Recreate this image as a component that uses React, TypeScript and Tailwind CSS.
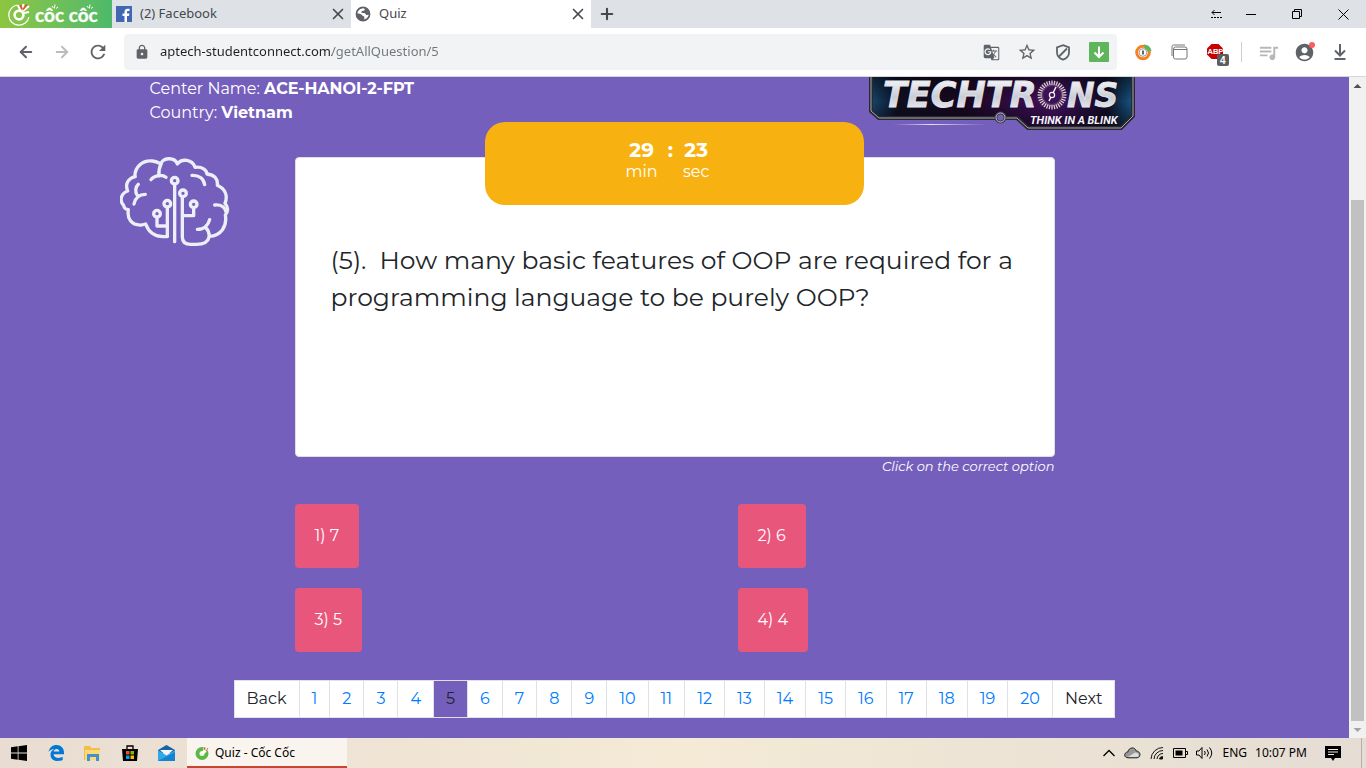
import type { ReactNode } from "react";
import { ArrowLeft, ArrowRight, Plus, X } from "lucide-react";
import {
  MdAccountCircle,
  MdGTranslate,
  MdLock,
  MdOutlineStarBorder,
  MdQueueMusic,
  MdRefresh,
} from "react-icons/md";

const answers = ["1) 7", "2) 6", "3) 5", "4) 4"];
const pages = Array.from({ length: 20 }, (_, i) => i + 1);
const currentPage = 5;

function IconButton({ label, children }: { label: string; children: ReactNode }) {
  return (
    <button aria-label={label} className="flex h-9 w-9 shrink-0 items-center justify-center text-[#5f6368]">
      {children}
    </button>
  );
}

function CocCocBrand() {
  return (
    <div className="flex w-28 shrink-0 items-center gap-1 bg-linear-to-r from-[#8dc63f] to-[#4db96b] pl-2 text-white">
      <svg width="23" height="26" viewBox="0 0 23 26" fill="none" aria-hidden="true">
        <path d="M9 4A10.200 10.200 0 1 0 21 16" stroke="#fff" strokeWidth="1.200" />
        <circle cx="11" cy="14" r="4.400" stroke="#fff" strokeWidth="2.600" />
        <path d="M9.500 4l3 5M15.500 3l-1.500 6M21 5l-6 5M21 11l-5 1" stroke="#fff" strokeWidth="2" />
        <path d="M12.500 4l1.500 4.500M19 3.500l-4 5" stroke="#e4572e" strokeWidth="1.800" />
      </svg>
      <svg width="68" height="26" viewBox="0 0 68 26" fill="none" stroke="#fff" aria-hidden="true">
        <text x="0" y="21" fill="#fff" strokeWidth="0.300" fontFamily="Lato" fontWeight="700" fontSize="19">
          côc côc
        </text>
        <path d="M17 5l1.500 2M20 3.500l-.6 4M23 6l-2 1.500M52 5l1.500 2M55 3.500l-.6 4M58 6l-2 1.500" />
      </svg>
    </div>
  );
}

function TabStrip() {
  return (
    <div className="flex h-7 bg-[#dee1e6] text-[13px] text-[#45494d]">
      <CocCocBrand />
      <div className="flex w-[239px] items-center pr-1 pl-1">
        <svg width="16" height="16" viewBox="0 0 16 16" aria-hidden="true">
          <rect width="16" height="16" fill="#4267b2" />
          <path d="M11 16V10h2l.4-2.4H11V6.2c0-.8.3-1.2 1.3-1.2h1.2V2.8c-.3 0-1-.1-1.8-.1C9.700 2.700 8.500 3.900 8.500 5.900v1.700H6.500V10h2v6z" fill="#fff" />
        </svg>
        <a href="#facebook" className="ml-2 grow">(2) Facebook</a>
        <button aria-label="Close Facebook tab"><X size={18} strokeWidth={2.2} /></button>
      </div>
      <div className="flex w-60 items-center bg-white pr-1 pl-1">
        <svg width="16" height="16" viewBox="0 0 16 16" aria-hidden="true">
          <circle cx="8" cy="8" r="7" fill="#5f6368" />
          <path d="M8 1.800c2 .6 2.400 1.800 1.200 2.600-1.200.6-2.500.2-2.800 1.500-.2 1.200 1.400 1 2.800 1.200 1.600.3 1.300 2 2.600 2l2.400-.3c-.6 2.500-2.600 4.600-5 5l.2-2.400c-.1-1.400-2-1-2.400-2.300C6.600 8 4.500 7.600 2 7.200 2.400 4.600 4.800 2.200 8 1.800z" fill="#fff" />
          <circle cx="8" cy="8" r="6.600" fill="none" stroke="#5f6368" strokeWidth="1.600" />
        </svg>
        <a href="#quiz" className="ml-2 grow">Quiz</a>
        <button aria-label="Close Quiz tab"><X size={18} strokeWidth={2.2} /></button>
      </div>
      <button aria-label="New tab" className="flex w-8 items-center justify-center">
        <Plus size={18} strokeWidth={2.8} />
      </button>
      <div className="ml-auto flex text-black">
        <button aria-label="Side panel" className="flex w-6 items-center justify-center">
          <svg width="11" height="9" viewBox="0 0 11 9" fill="none" stroke="currentColor">
            <path d="M1 2.500h9M3.500 0L1 2.500 3.500 5" />
            <path d="M0 7.500h11" strokeDasharray="2 1" />
          </svg>
        </button>
        <button aria-label="Minimize" className="flex w-[46px] items-center justify-center">
          <svg width="10" height="10" viewBox="0 0 10 10" stroke="currentColor"><path d="M0 5.500h10" /></svg>
        </button>
        <button aria-label="Restore" className="flex w-[46px] items-center justify-center">
          <svg width="10" height="10" viewBox="0 0 10 10" fill="none" stroke="currentColor">
            <path d="M.5 2.500h7v7h-7zM2.500 2.500v-2h7v7h-2" />
          </svg>
        </button>
        <button aria-label="Close" className="flex w-[46px] items-center justify-center">
          <svg width="11" height="11" viewBox="0 0 11 11" stroke="currentColor"><path d="M.5.5l10 10M10.500.5l-10 10" /></svg>
        </button>
      </div>
    </div>
  );
}

function Toolbar() {
  return (
    <div className="flex h-[49px] shrink-0 items-center border-b border-[#d5d6da] bg-white px-2">
      <IconButton label="Back"><ArrowLeft size={18} strokeWidth={2.6} /></IconButton>
      <IconButton label="Forward"><ArrowRight size={18} strokeWidth={2.6} className="text-[#babcbe]" /></IconButton>
      <IconButton label="Reload"><MdRefresh size={22} /></IconButton>
      <div className="mx-2 flex h-9 min-w-0 grow items-center rounded bg-[#f1f3f4]">
        <MdLock size={16} className="mx-2.5 shrink-0 text-[#5f6368]" />
        <input
          aria-label="Address"
          defaultValue="aptech-studentconnect.com/getAllQuestion/5"
          className="min-w-0 grow bg-[linear-gradient(to_right,#202124_172px,#70757a_172px)] bg-clip-text text-[13px] text-transparent outline-none"
        />
        <IconButton label="Translate page"><MdGTranslate size={17} /></IconButton>
        <IconButton label="Bookmark"><MdOutlineStarBorder size={20} /></IconButton>
        <IconButton label="Ad blocker">
          <svg width="16" height="17" viewBox="0 0 16 17" fill="none" stroke="currentColor" strokeWidth="1.8">
            <path d="M8 1.200L14 3.400v5c0 3.300-2.500 6-6 7.300-3.500-1.300-6-4-6-7.300v-5zM4 12.500L12 4.500" />
          </svg>
        </IconButton>
        <IconButton label="Download media">
          <svg width="20" height="20" viewBox="0 0 20 20" fill="none" stroke="#fff" strokeWidth="2">
            <rect width="20" height="20" rx="1" fill="#5fb55c" stroke="none" />
            <path d="M10 4.500v10M5.500 10.500L10 15l4.500-4.500" />
          </svg>
        </IconButton>
      </div>
      <IconButton label="Coin extension">
        <svg width="18" height="18" viewBox="0 0 18 18" fill="none">
          <circle cx="9" cy="9.500" r="6.300" stroke="#f58220" strokeWidth="3" />
          <path d="M10 1.500a8 8 0 0 1 7.500 6.500l-4 .5a4.500 4.500 0 0 0-3-3z" fill="#5fb55c" />
          <circle cx="9" cy="9.500" r="3.800" fill="#fff" stroke="#999" />
          <path d="M9 7.500v4" stroke="#666" strokeWidth="2" />
        </svg>
      </IconButton>
      <IconButton label="Windows extension">
        <svg width="17" height="16" viewBox="0 0 17 16" fill="none" stroke="#777">
          <path d="M1 12V2.500Q1 1 2.500 1H14" />
          <rect x="2.500" y="3" width="13.500" height="12" rx="2" />
          <path d="M2.500 5.500h13.500" />
        </svg>
      </IconButton>
      <IconButton label="AdBlock Plus, 4 blocked">
        <svg width="24" height="24" viewBox="-2 0 24 24" className="overflow-visible">
          <path d="M6.500 4h7L18 8.500v6L13.500 19h-7L2 14.500v-6z" fill="#c80000" />
          <text x="2.500" y="14" fontSize="7.500" fontWeight="700" fontFamily="Liberation Sans" fill="#fff">ABP</text>
          <rect x="12" y="14" width="12" height="12" rx="2" fill="#5c5e60" />
          <text x="15" y="24" fontSize="10" fontWeight="700" fontFamily="Liberation Sans" fill="#fff">4</text>
        </svg>
      </IconButton>
      <span className="mx-2 h-5 w-px bg-[#cdced1]" />
      <IconButton label="Media controls"><MdQueueMusic size={23} className="text-[#b5b7b9]" /></IconButton>
      <IconButton label="Profile">
        <span className="relative block">
          <MdAccountCircle size={21} className="block" />
          <span className="absolute top-0 right-0 size-1.5 rounded-full bg-[#ff5c5c]" />
        </span>
      </IconButton>
      <IconButton label="Downloads">
        <svg width="14" height="16" viewBox="0 0 14 16" fill="none" stroke="currentColor" strokeWidth="2">
          <path d="M7 0v11M2 6.500l5 5 5-5M1.500 15h11" />
        </svg>
      </IconButton>
    </div>
  );
}

function TechtronsLogo() {
  const ticks = Array.from({ length: 32 }, (_, i) => i * 11.25);
  return (
    <svg width="266" height="54" viewBox="0 0 266 54" role="img" aria-label="Techtrons, Think in a blink">
      <defs>
        <linearGradient id="plate" x1="0" x2="1">
          <stop offset="0" stopColor="#155078" />
          <stop offset=".1" stopColor="#101022" />
          <stop offset=".35" stopColor="#190820" />
          <stop offset=".7" stopColor="#4b126a" />
          <stop offset=".9" stopColor="#120d24" />
          <stop offset="1" stopColor="#146394" />
        </linearGradient>
        <linearGradient id="shade" x1="0" x2="0" y1="0" y2="1">
          <stop offset="0" stopColor="#07050e" stopOpacity=".65" />
          <stop offset=".5" stopColor="#07050e" stopOpacity=".1" />
          <stop offset="1" stopColor="#07050e" stopOpacity=".65" />
        </linearGradient>
        <linearGradient id="steel" x1="0" x2="0" y1="0" y2="1">
          <stop offset="0" stopColor="#fff" />
          <stop offset=".55" stopColor="#c9ccd6" />
          <stop offset="1" stopColor="#f7f7fb" />
        </linearGradient>
        <linearGradient id="streak" gradientUnits="userSpaceOnUse" x1="24" x2="118" y1="0" y2="0">
          <stop offset="0" stopColor="#d9d2e8" stopOpacity="0" />
          <stop offset=".4" stopColor="#e9e4ee" />
          <stop offset="1" stopColor="#d9d2e8" stopOpacity="0" />
        </linearGradient>
      </defs>
      <path d="M2-2V34l8 7H148l11 10h93l12-12V-2z" fill="url(#plate)" />
      <path d="M2-2V34l8 7H148l11 10h93l12-12V-2z" fill="url(#shade)" stroke="#29272f" strokeWidth="4" />
      <path d="M2-2V34l8 7H148l11 10h93l12-12V-2" fill="none" stroke="#a8a8b2" strokeWidth="1" />
      <path d="M24 47.500h94" stroke="url(#streak)" strokeWidth="1" />
      <g fill="url(#steel)" stroke="#e6e7ee" strokeWidth=".8" fontFamily="DejaVu Sans" fontWeight="700" fontStyle="italic">
        <text x="14" y="30" fontSize="35">TECHTR</text>
        <text x="198" y="30" fontSize="33">NS</text>
      </g>
      <circle cx="183" cy="18" r="14" fill="#3d1156" />
      <g stroke="#d9cfc8" strokeWidth="1.300">
        {ticks.map((a) => (
          <path key={a} d="M183 3.500v4.500" transform={`rotate(${a} 183 18)`} />
        ))}
      </g>
      <circle cx="183" cy="18" r="9.500" fill="none" stroke="#7c668a" strokeWidth=".6" />
      <circle cx="183" cy="18" r="2.600" fill="none" stroke="#eee" strokeWidth="1.200" />
      <path d="M180 24l2-4M184 16l3-6" stroke="#fff" strokeWidth="1.400" />
      <circle cx="131.500" cy="40.500" r="4.500" fill="#755fbc" stroke="#403d4b" strokeWidth="3" />
      <circle cx="131.500" cy="40.500" r="4.500" fill="none" stroke="#b5b5c0" strokeWidth="1" />
      <text x="161" y="47" fill="#f3f2f7" fontFamily="Roboto" fontWeight="700" fontStyle="italic" fontSize="11">
        THINK IN A BLINK
      </text>
    </svg>
  );
}

function BrainIcon() {
  return (
    <svg width="110" height="92" viewBox="30 246 330 276" fill="none" stroke="#eceef8" strokeWidth="10" strokeLinecap="round" strokeLinejoin="round" aria-hidden="true">
      <path d="M75 305c-2-28 22-50 52-47 12 1 20 6 26 9 2-18 40-24 49 0 14-18 45-14 53 10 22-3 35 8 36 20 22 2 33 14 31 34 24 11 32 31 23 54 9 9 11 24 1 35 6 34-13 62-48 64-4 19-17 24-39 24h-17c-18 0-25-8-25-22V366" />
      <path d="M75 305c-22 6-30 23-22 43-20 7-26 29-12 43 2 9 4 11 14 13-4 26 8 48 40 46l12-3c10 27 29 38 53 38h12V397" />
      <path d="M153 267c-5 10-8 18-6 36M123 314c9-13 33-17 45-7M85 328c-9 8-10 22-4 32M106 358c-20 0-30 10-34 29M194 331v169M141 430v23h31M219 422h32v-21M246 301c21-1 35 10 38 28M314 390c18-2 31 6 34 21M299 434c-4 15-16 29-37 29M288 459c9 8 9 16 10 25" />
      <circle cx="194" cy="317" r="10" />
      <circle cx="219" cy="355" r="10" />
      <circle cx="172" cy="386" r="10" />
      <circle cx="141" cy="416" r="10" />
      <circle cx="251" cy="388" r="10" />
    </svg>
  );
}

function Timer() {
  return (
    <div className="absolute inset-x-1/4 -top-9 flex h-[83px] justify-center gap-2.5 rounded-[20px] bg-[#f7b211] pt-4 pr-3.5 text-center text-base/5 text-white">
      <div>
        <div className="text-xl/6 font-bold">29</div>
        <div>min</div>
      </div>
      <div className="text-xl/6 font-bold">:</div>
      <div>
        <div className="text-xl/6 font-bold">23</div>
        <div>sec</div>
      </div>
    </div>
  );
}

function QuizPage() {
  return (
    <main className="min-w-0 grow overflow-hidden bg-[#755fbc] font-['Montserrat','Inter',sans-serif]">
      <div className="mx-auto max-w-[1140px] px-[15px]">
        <header className="flex h-20 items-start justify-between pr-[95px] pl-[30px] text-base/6 text-white">
          <div>
            <p>Center Name: <b>ACE-HANOI-2-FPT</b></p>
            <p>Country: <b>Vietnam</b></p>
          </div>
          <TechtronsLogo />
        </header>
        <div className="flex">
          <div className="w-[175px] shrink-0"><BrainIcon /></div>
          <div className="min-w-0 grow">
            <section className="relative h-[300px] max-w-[760px] rounded border border-[#dfdfdf] bg-white px-[35px] pt-[84px]">
              <Timer />
              <h1 className="text-[25px]/[37px] font-normal text-[#212529]">
                (5).&nbsp; How many basic features of OOP are required for a programming language to be purely OOP?
              </h1>
            </section>
            <p className="max-w-[760px] text-right text-[13px]/[19px] text-white italic">Click on the correct option</p>
            <div className="mt-7 grid grid-cols-[443px_1fr] justify-items-start gap-y-5">
              {answers.map((answer) => (
                <button key={answer} className="h-16 rounded bg-[#e9567b] px-5 text-base text-white">
                  {answer}
                </button>
              ))}
            </div>
          </div>
        </div>
      </div>
      <nav aria-label="Questions" className="mt-7 flex justify-center text-base/9">
        <ul className="flex divide-x divide-[#dee2e6] border border-[#dee2e6] bg-white text-[#007bff]">
          <li><a href="#back" className="block px-3 text-[#212529]">Back</a></li>
          {pages.map((page) => (
            <li key={page}>
              <a
                href={`#${page}`}
                aria-current={page === currentPage ? "page" : undefined}
                className={page === currentPage ? "block bg-[#755fbc] px-3 text-[#212529]" : "block px-3"}
              >
                {page}
              </a>
            </li>
          ))}
          <li><a href="#next" className="block px-3 text-[#212529]">Next</a></li>
        </ul>
      </nav>
    </main>
  );
}

function ScrollBar() {
  return (
    <div className="flex w-[17px] shrink-0 flex-col items-center bg-[#f1f1f1]" aria-hidden="true">
      <svg width="17" height="17" viewBox="0 0 17 17"><path d="M4.500 11h8l-4-4z" fill="#505050" /></svg>
      <div className="grow" />
      <div className="h-5/6 max-h-[521px] w-[13px] bg-[#c1c1c1]" />
      <svg width="17" height="17" viewBox="0 0 17 17"><path d="M4.500 7h8l-4 4z" fill="#a3a3a3" /></svg>
    </div>
  );
}

function TaskIcon({ label, children }: { label: string; children: ReactNode }) {
  return <button aria-label={label} className="flex w-[37px] items-center justify-center">{children}</button>;
}

function TrayIcon({ label, children }: { label: string; children: ReactNode }) {
  return <button aria-label={label} className="flex w-6 items-center justify-center">{children}</button>;
}

function Taskbar() {
  return (
    <footer className="flex h-[30px] shrink-0 bg-linear-to-r from-[#e9ddd3] via-[#f4ead6] to-[#e5dcd4] text-xs text-black">
      <TaskIcon label="Start">
        <svg width="16" height="16" viewBox="0 0 16 16"><path d="M0 2.200l6.700-.9v6.300H0zM7.500 1.200L16 0v7.600H7.500zM0 8.400h6.700v6.300L0 13.800zM7.500 8.400H16V16l-8.500-1.200z" /></svg>
      </TaskIcon>
      <TaskIcon label="Edge">
        <svg width="16" height="16" viewBox="0 0 16 16"><path d="M.5 7C1.500 2.500 4.500 0 8.500 0 13 0 16 3.200 16 7.500V9.200H5.600c.2 2.700 2.400 3.700 4.800 3.700 1.700 0 3-.4 4.300-1.100v3.300c-1.500.7-3.200.9-5 .9-4.700 0-7.200-2.900-7.200-6.300 0-2.600 1.400-4.700 3.900-5.700C3.600 4.300 1.700 5.300.5 7zM5.700 6.500h5.700C11.300 4.700 10.300 3.900 8.700 3.900 7 3.900 6 5 5.700 6.500z" fill="#0078d7" /></svg>
      </TaskIcon>
      <TaskIcon label="File Explorer">
        <svg width="17" height="15" viewBox="0 0 17 15"><path d="M0 0h6l1.500 2H16v12H0z" fill="#f2bd4a" /><path d="M1 4h15v10H1z" fill="#ffd977" /><path d="M3 15V8h12v7h-3v-4H6v4z" fill="#3f91d2" /></svg>
      </TaskIcon>
      <TaskIcon label="Microsoft Store">
        <svg width="16" height="16" viewBox="0 0 16 16"><path d="M0 4h16l-1 12H1z" /><path d="M5 5V1h6v4" fill="none" stroke="#000" strokeWidth="1.300" /><path d="M4 6h3.500v3.500H4z" fill="#f25022" /><path d="M8.500 6H12v3.500H8.500z" fill="#7fba00" /><path d="M4 10.500h3.500V14H4z" fill="#00a4ef" /><path d="M8.500 10.500H12V14H8.500z" fill="#ffb900" /></svg>
      </TaskIcon>
      <TaskIcon label="Mail">
        <svg width="17" height="16" viewBox="0 0 17 16"><path d="M0 5l8.500-5L17 5v3H0z" fill="#1565a8" /><path d="M2 5h13l-6.500 6z" fill="#f4f7fa" /><path d="M0 5l8.500 5.500L17 5v11H0z" fill="#2fa8ea" /><path d="M0 16l17-9v9z" fill="#1683d0" /></svg>
      </TaskIcon>
      <button className="ml-0.5 flex w-40 items-center gap-1 border-b-2 border-[#c8452f] bg-[#f9f5ee] pt-0.5 pl-2">
        <svg width="16" height="14" viewBox="0 0 16 14" fill="none"><circle cx="7" cy="7.500" r="4.500" stroke="#5cb947" strokeWidth="4" /><path d="M8 7l2-6M9 7l4-5" stroke="#fff" strokeWidth="2" /><path d="M9 4l1-3M11 5l2-3" stroke="#e4572e" /></svg>
        Quiz - Cốc Cốc
      </button>
      <div className="ml-auto flex">
        <TrayIcon label="Show hidden icons">
          <svg width="12" height="8" viewBox="0 0 12 8" fill="none" stroke="#000" strokeWidth="1.300"><path d="M.5 7L6 1.500 11.500 7" /></svg>
        </TrayIcon>
        <TrayIcon label="OneDrive">
          <svg width="17" height="12" viewBox="0 0 17 12"><path d="M4 10.800C-1 10.500.3 5 3.800 5 5-.5 11.500 0 12.200 4c5 .3 4.800 6.500.8 6.800z" fill="#999" stroke="#222" /><path d="M4 10L11 5.500c4 0 5 4.300 2 4.500z" fill="#ddd" /></svg>
        </TrayIcon>
        <TrayIcon label="Network">
          <svg width="14" height="14" viewBox="0 0 14 14" fill="none" stroke="#111"><path d="M1 13A12 12 0 0 1 13 1.500M4 13a9 9 0 0 1 9-8.500M7 13a6 6 0 0 1 6-5.500" /><path d="M9.500 13a3 3 0 0 1 3-2.500v2.500z" fill="#111" /></svg>
        </TrayIcon>
        <TrayIcon label="Battery">
          <svg width="15" height="10" viewBox="0 0 15 10"><path d="M.5.5h12v9H.5zM13 3.500h1.500v3H13" fill="none" stroke="#000" /><path d="M2.500 2.500h7v5h-7z" /></svg>
        </TrayIcon>
        <TrayIcon label="Volume">
          <svg width="17" height="14" viewBox="0 0 17 14" fill="none" stroke="#000"><path d="M.5 5h2.500l3-3.500v11L3 9H.5zM8.500 5q1.500 2 0 4M11 3.500q3 3.500 0 7M13.500 1.500q4.500 5.500 0 11" /></svg>
        </TrayIcon>
        <span className="ml-1.5 self-center">ENG</span>
        <time className="ml-2 self-center">10:07 PM</time>
        <button aria-label="Notifications" className="ml-[18px] flex items-center">
          <svg width="16" height="16" viewBox="0 0 16 16"><path d="M0 1h16v12h-6l-2 3-2-3H0z" /><path d="M3 4.500h10M3 7h10M3 9.500h6" stroke="#f4ede5" /></svg>
        </button>
        <span className="mr-1 ml-5 w-px bg-[#b8afa7]" />
      </div>
    </footer>
  );
}

export default function App() {
  return (
    <div className="flex min-h-screen flex-col font-['Segoe_UI','Noto_Sans',sans-serif]">
      <TabStrip />
      <Toolbar />
      <div className="flex grow">
        <QuizPage />
        <ScrollBar />
      </div>
      <Taskbar />
    </div>
  );
}
